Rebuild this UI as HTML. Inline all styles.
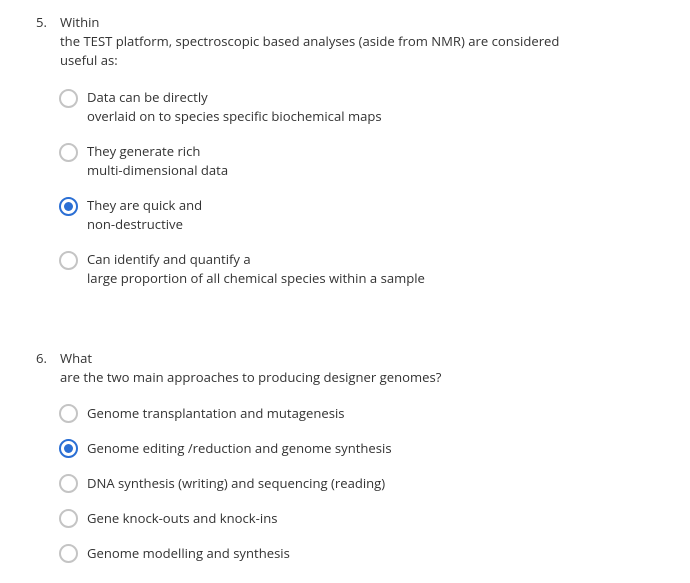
<!DOCTYPE html>
<html><head><meta charset="utf-8"><style>
body{margin:0;width:690px;height:583px;background:#fff;font-family:"Open Sans","Liberation Sans",sans-serif;font-size:13.1px;color:#333;position:relative;overflow:hidden}
.t{position:absolute;white-space:nowrap;line-height:19px}
.r{position:absolute;width:15px;height:15px;border:2px solid #c4c4c4;border-radius:50%;box-sizing:content-box}
.r.s{border-color:#2b6fd4}
.r.s::after{content:"";position:absolute;left:3px;top:3px;width:9px;height:9px;border-radius:50%;background:#2b6fd4}
</style></head><body>
<div class="t" style="left:36px;top:13px">5.</div>
<div class="t" style="left:60px;top:13px">Within<br>the TEST platform, spectroscopic based analyses (aside from NMR) are considered<br>useful as:</div>

<div class="r" style="left:59px;top:89px"></div>
<div class="t" style="left:87px;top:88px">Data can be directly<br>overlaid on to species specific biochemical maps</div>
<div class="r" style="left:59px;top:143px"></div>
<div class="t" style="left:87px;top:142px">They generate rich<br>multi-dimensional data</div>
<div class="r s" style="left:59px;top:197px"></div>
<div class="t" style="left:87px;top:196px">They are quick and<br>non-destructive</div>
<div class="r" style="left:59px;top:251px"></div>
<div class="t" style="left:87px;top:250px">Can identify and quantify a<br>large proportion of all chemical species within a sample</div>

<div class="t" style="left:36px;top:349px">6.</div>
<div class="t" style="left:60px;top:349px">What<br>are the two main approaches to producing designer genomes?</div>

<div class="r" style="left:59px;top:404px"></div>
<div class="t" style="left:87px;top:404px">Genome transplantation and mutagenesis</div>
<div class="r s" style="left:59px;top:439px"></div>
<div class="t" style="left:87px;top:439px">Genome editing /reduction and genome synthesis</div>
<div class="r" style="left:59px;top:474px"></div>
<div class="t" style="left:87px;top:474px">DNA synthesis (writing) and sequencing (reading)</div>
<div class="r" style="left:59px;top:509px"></div>
<div class="t" style="left:87px;top:509px">Gene knock-outs and knock-ins</div>
<div class="r" style="left:59px;top:544px"></div>
<div class="t" style="left:87px;top:544px">Genome modelling and synthesis</div>
</body></html>
